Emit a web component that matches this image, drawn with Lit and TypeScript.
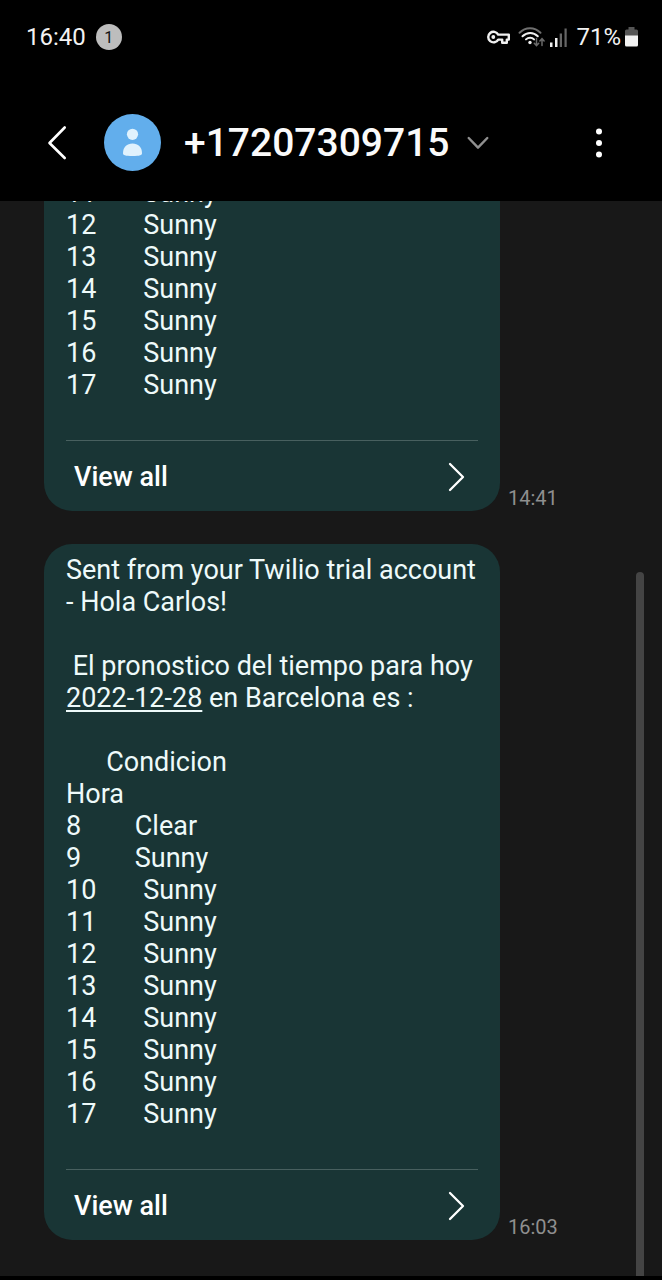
import { LitElement, html, css, type TemplateResult } from "lit";
import { customElement, property } from "lit/decorators.js";

interface Message {
  time: string;
  body: TemplateResult | string;
}

const pad = (count: number) => "\u00a0".repeat(count);

const forecastRow = (hour: number, condition: string) =>
  `${hour}${pad(hour < 10 ? 8 : 7)}${condition}`;

const sunnyRows = (from: number, to: number) =>
  Array.from({ length: to - from + 1 }, (_, i) => forecastRow(from + i, "Sunny")).join("\n");

const messages: Message[] = [
  { time: "14:41", body: sunnyRows(11, 17) },
  {
    time: "16:03",
    body: html`Sent from your Twilio trial account - Hola Carlos!${"\n\n"}${pad(1)}El pronostico del tiempo para hoy <a href="#2022-12-28">2022-12-28</a> en Barcelona es :${"\n\n"}${pad(6)}Condicion${"\n"}Hora${"\n"}${forecastRow(8, "Clear")}${"\n"}${sunnyRows(9, 17)}`,
  },
];

@customElement("status-bar")
class StatusBar extends LitElement {
  static styles = css`
    :host {
      display: flex;
      align-items: center;
      justify-content: space-between;
      height: 74px;
      padding: 0 24px 0 26px;
      color: #f2f2f2;
      font-size: 24px;
      line-height: 28px;
    }
    .side {
      display: flex;
      align-items: center;
    }
    .left {
      gap: 10px;
    }
    .badge {
      display: grid;
      place-items: center;
      width: 26px;
      height: 26px;
      border-radius: 50%;
      background: #bdbdbd;
      color: #111;
      font-size: 16px;
    }
    .key {
      margin-right: 8px;
    }
    .wifi {
      margin-right: 5px;
    }
    .signal {
      margin-right: 9px;
    }
    .battery {
      margin-left: 4px;
    }
    svg {
      display: block;
    }
  `;

  render() {
    return html`
      <div class="side left">
        <span>16:40</span>
        <span class="badge">1</span>
      </div>
      <div class="side">
        <svg class="key" width="23" height="14" viewBox="0 0 23 14" fill="none" stroke="#f0f0f0" stroke-width="2.4">
          <path d="M11.2 4.6H21.800V9.600H19.800V12.800H15.200V9.600H11.200A5.300 5.300 0 1 1 11.200 4.600Z" stroke-linejoin="round" />
          <circle cx="6.300" cy="7" r="1.900" fill="#f0f0f0" stroke="none" />
        </svg>
        <svg class="wifi" width="27" height="22" viewBox="0 0 27 22" fill="none" stroke-linecap="round">
          <path d="M1.500 6.800C7.500 .7 16.500 .7 22.500 6.800" stroke="#6f6f6f" stroke-width="2" />
          <path d="M4.500 10.200C9 5.800 15.500 5.800 19.800 10.200" stroke="#f0f0f0" stroke-width="2" />
          <path d="M8 13.400C10.300 11.200 14 11.200 16 13.400" stroke="#f0f0f0" stroke-width="2" />
          <circle cx="12" cy="16.500" r="1.700" fill="#f0f0f0" />
          <path d="M18.500 12.500V19.500M16.300 17.300L18.500 19.700L20.700 17.300M24 19.500V12.800M21.900 15L24 12.600L26.100 15" stroke="#6a6a6a" stroke-width="1.500" />
        </svg>
        <svg class="signal" width="17" height="19" viewBox="0 0 17 19">
          <path d="M0 14.500H2.500V19H0Z M5 10H7.500V19H5Z" fill="#f0f0f0" />
          <path d="M9.700 5.500H12V19H9.700Z M14.500 .5H16.700V19H14.500Z" fill="#666" />
        </svg>
        <span>71%</span>
        <svg class="battery" width="13" height="20" viewBox="0 0 13 20">
          <path d="M3.500 0H9.500V2.500H11.500A1.500 1.500 0 0 1 13 4V9H0V4A1.500 1.500 0 0 1 1.500 2.500H3.500Z" fill="#555" />
          <path d="M0 8.500H13V18A1.500 1.500 0 0 1 11.500 19.500H1.500A1.500 1.500 0 0 1 0 18Z" fill="#f2f2f2" />
        </svg>
      </div>
    `;
  }
}

@customElement("chat-header")
class ChatHeader extends LitElement {
  static styles = css`
    :host {
      display: flex;
      align-items: center;
      height: 127px;
      padding: 10px 45px 0 44px;
      box-sizing: border-box;
      color: #fafafa;
    }
    button {
      display: flex;
      align-items: center;
      margin: 0;
      padding: 0;
      border: 0;
      background: none;
      color: inherit;
      font: inherit;
      cursor: pointer;
    }
    svg {
      display: block;
    }
    .avatar {
      margin: 0 23px 0 34px;
    }
    .title {
      gap: 18px;
    }
    h1 {
      margin: 0;
      font-size: 39px;
      font-weight: 500;
      line-height: 48px;
    }
    .more {
      margin-left: auto;
      padding: 0 15px;
    }
  `;

  render() {
    return html`
      <button aria-label="Back">
        <svg width="26" height="36" viewBox="0 0 26 36" fill="none" stroke="#fff" stroke-width="2.600" stroke-linecap="round" stroke-linejoin="round">
          <path d="M20.700 2.500L5.500 18L20.700 33" />
        </svg>
      </button>
      <svg class="avatar" width="57" height="57" viewBox="0 0 57 57">
        <circle cx="28.500" cy="28.500" r="28.500" fill="#62aeec" />
        <circle cx="28.500" cy="20.300" r="5.600" fill="#e0f2fd" />
        <path d="M19 39.200C19 33 23 29.500 28.500 29.500C34 29.500 38 33 38 39.200C38 41 36 42 28.500 42C21 42 19 41 19 39.200Z" fill="#e0f2fd" />
      </svg>
      <button class="title">
        <h1>+17207309715</h1>
        <svg width="22" height="14" viewBox="0 0 22 14" fill="none" stroke="#909090" stroke-width="2.400" stroke-linecap="round" stroke-linejoin="round">
          <path d="M1.700 2L11 11.700L20.300 2" />
        </svg>
      </button>
      <button class="more" aria-label="More options">
        <svg width="6" height="30" viewBox="0 0 6 30" fill="#fff">
          <circle cx="3" cy="3.500" r="3" />
          <circle cx="3" cy="15" r="3" />
          <circle cx="3" cy="26.500" r="3" />
        </svg>
      </button>
    `;
  }
}

@customElement("message-bubble")
class MessageBubble extends LitElement {
  @property({ attribute: false }) message!: Message;

  static styles = css`
    :host {
      display: grid;
      grid-template-columns: minmax(0, 1fr) 50px;
      column-gap: 8px;
      align-items: end;
      flex: none;
    }
    .bubble {
      padding: 10px 22px 0;
      border-radius: 28px;
      background: #193535;
      color: #eefafa;
    }
    .text {
      margin: 0;
      padding-bottom: 39px;
      font-size: 27px;
      line-height: 32px;
      white-space: pre-wrap;
    }
    a {
      color: inherit;
      text-decoration-thickness: 2px;
      text-underline-offset: 3px;
    }
    .view-all {
      display: flex;
      align-items: center;
      justify-content: space-between;
      width: 100%;
      height: 71px;
      margin: 0;
      padding: 1px 13px 0 8px;
      border: 0;
      border-top: 1px solid #48605f;
      background: none;
      color: #fff;
      font: inherit;
      font-size: 27px;
      font-weight: 500;
      cursor: pointer;
    }
    time {
      padding-bottom: 1px;
      color: #8f8f8f;
      font-size: 20px;
      line-height: 24px;
      white-space: nowrap;
    }
  `;

  render() {
    return html`
      <article class="bubble">
        <p class="text">${this.message.body}</p>
        <button class="view-all">
          View all
          <svg width="17" height="30" viewBox="0 0 17 30" fill="none" stroke="#fff" stroke-width="2.300" stroke-linecap="round" stroke-linejoin="round">
            <path d="M2 2L15 15L2 28" />
          </svg>
        </button>
      </article>
      <time>${this.message.time}</time>
    `;
  }
}

@customElement("app-root")
class AppRoot extends LitElement {
  static styles = css`
    :host {
      display: flex;
      flex-direction: column;
      height: 100vh;
      padding-bottom: 4px;
      box-sizing: border-box;
      background: #000;
      font-family: Roboto, "Noto Sans", sans-serif;
    }
    .thread {
      position: relative;
      display: flex;
      flex: 1;
      flex-direction: column;
      justify-content: flex-end;
      gap: 33px;
      min-height: 0;
      padding: 0 104px 36px 44px;
      overflow: hidden;
      background: #181818;
    }
    .scroll-thumb {
      position: absolute;
      top: 34.5%;
      right: 18px;
      bottom: 0;
      width: 8px;
      border-radius: 4px 4px 0 0;
      background: #444;
    }
  `;

  render() {
    return html`
      <status-bar></status-bar>
      <chat-header></chat-header>
      <main class="thread">
        ${messages.map((m) => html`<message-bubble .message=${m}></message-bubble>`)}
        <div class="scroll-thumb"></div>
      </main>
    `;
  }
}
